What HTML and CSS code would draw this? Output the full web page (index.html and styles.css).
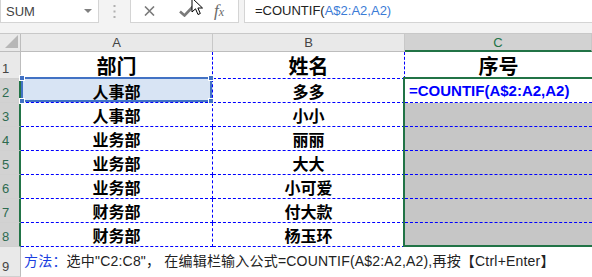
FILE: index.html
```html
<!DOCTYPE html>
<html>

<head>
    <title>COUNTIF 序号</title>
    <link rel="stylesheet" href="styles.css">
</head>

<body>
    <div class="toolbar">
        <div class="name-box"><span>SUM</span><span class="caret"></span></div>
        <div class="grip">
            <svg width="3" height="13" viewBox="0 0 3 13">
                <rect x="0.5" y="0" width="2" height="2" fill="#b0b0b0" />
                <rect x="0.5" y="5.5" width="2" height="2" fill="#b0b0b0" />
                <rect x="0.5" y="11" width="2" height="2" fill="#b0b0b0" />
            </svg>
        </div>
        <div class="func-box">
            <svg class="btn-x" width="11" height="10" viewBox="0 0 11 10">
                <path d="M1 0.5 L10 9.5 M10 0.5 L1 9.5" stroke="#7a7a7a" stroke-width="1.6" />
            </svg>
            <svg class="btn-ok" width="15" height="12" viewBox="0 0 15 12">
                <path d="M1 6.5 L5.5 10.5 L14 1.5" stroke="#7a7a7a" stroke-width="2.6" fill="none" />
            </svg>
            <span class="fx">f<span class="fx-sub">x</span></span>
        </div>
        <div class="formula">=COUNTIF(<span class="ref">A$2:A2,A2)</span></div>
    </div>

    <div class="sheet">
        <!-- column headers -->
        <div class="corner">
            <svg class="corner-tri" width="13" height="13" viewBox="0 0 13 13">
                <polygon points="13,0 13,13 0,13" fill="#b7b7b7" />
            </svg>
        </div>
        <div class="ch">A</div>
        <div class="ch">B</div>
        <div class="ch on">C</div>

        <div class="rh">1</div>
        <div class="cell head">部门</div>
        <div class="cell head">姓名</div>
        <div class="cell head last">序号</div>

        <div class="rh on">2</div>
        <div class="cell sel">人事部
            <div class="sel-frame">
                <span class="handle tl"></span>
                <span class="handle tr"></span>
                <span class="handle bl"></span>
                <span class="handle br"></span>
            </div>
        </div>
        <div class="cell">多多</div>
        <div class="cell last active">=COUNTIF(A$2:A2,A2)</div>

        <div class="rh on">3</div>
        <div class="cell">人事部</div>
        <div class="cell">小小</div>
        <div class="cell last gray"></div>

        <div class="rh on">4</div>
        <div class="cell">业务部</div>
        <div class="cell">丽丽</div>
        <div class="cell last gray"></div>

        <div class="rh on">5</div>
        <div class="cell">业务部</div>
        <div class="cell">大大</div>
        <div class="cell last gray"></div>

        <div class="rh on">6</div>
        <div class="cell">业务部</div>
        <div class="cell">小可爱</div>
        <div class="cell last gray"></div>

        <div class="rh on">7</div>
        <div class="cell">财务部</div>
        <div class="cell">付大款</div>
        <div class="cell last gray"></div>

        <div class="rh on">8</div>
        <div class="cell">财务部</div>
        <div class="cell">杨玉环</div>
        <div class="cell last gray"></div>

        <div class="rh">9</div>
        <div class="note"><span class="note-key">方法：</span>选中"C2:C8"， 在编辑栏输入公式=COUNTIF(A$2:A2,A2),再按【Ctrl+Enter】</div>

        <!-- selected range C2:C8 -->
        <div class="range-frame"></div>
    </div>

    <svg class="cursor" width="14" height="20" viewBox="0 0 14 20">
        <path d="M1 1 L1 15 L4.5 11.8 L7 17.5 L9.3 16.5 L6.9 11 L11.5 11 Z" fill="#fff" stroke="#000" stroke-width="1" stroke-linejoin="round" />
    </svg>
</body>

</html>
```

FILE: styles.css
```css
* {
    box-sizing: border-box;
}

body {
    margin: 0;
    width: 592px;
    height: 277px;
    overflow: hidden;
    position: relative;
    background: #fff;
    font-family: "Liberation Sans", "Noto Sans CJK SC", sans-serif;
}

/* Formula bar */
.toolbar {
    display: flex;
    align-items: flex-start;
    height: 34px;
    background: #f3f3f3;
    border-bottom: 1px solid #c8c8c8;
}

.name-box {
    display: flex;
    align-items: center;
    justify-content: space-between;
    width: 99px;
    height: 23px;
    padding: 0 6px 0 5px;
    background: #fff;
    border: 1px solid #d4d4d4;
    border-top: none;
    font-size: 13px;
    color: #444;
}

.caret {
    border-left: 4px solid transparent;
    border-right: 4px solid transparent;
    border-top: 4px solid #808080;
}

.grip {
    display: flex;
    align-items: center;
    justify-content: center;
    width: 31px;
    height: 23px;
}

.func-box {
    display: flex;
    align-items: center;
    width: 109px;
    height: 23px;
    padding-left: 13px;
    background: #fff;
    border: 1px solid #d4d4d4;
    border-top: none;
}

.btn-ok {
    margin-left: 24px;
}

.fx {
    margin-left: 20px;
    font-family: "Liberation Serif", serif;
    font-style: italic;
    font-size: 17px;
    line-height: 18px;
    color: #6a6a6a;
}

.fx-sub {
    font-size: 12px;
}

.formula {
    flex: 1;
    height: 23px;
    margin-left: 5px;
    padding-left: 10px;
    background: #fff;
    border-left: 1px solid #d4d4d4;
    border-bottom: 1px solid #d4d4d4;
    font-size: 13px;
    line-height: 22px;
    color: #222;
}

.ref {
    color: #3b7bd6;
}

/* Sheet grid */
.sheet {
    position: relative;
    display: grid;
    grid-template-columns: 21px 192px 192px 1fr;
    grid-template-rows: 18px 27px repeat(7, 24px) 30px;
}

.corner {
    position: relative;
    background: #e9e9e9;
    border-right: 1px solid #bdbdbd;
    border-bottom: 1px solid #bdbdbd;
}

.corner-tri {
    position: absolute;
    right: 2px;
    bottom: 3px;
}

.ch {
    background: #e9e9e9;
    border-right: 1px solid #c8c8c8;
    border-bottom: 1px solid #bdbdbd;
    text-align: center;
    font-size: 13px;
    line-height: 17px;
    color: #444;
}

.ch.on {
    background: #d2d2d2;
    color: #217346;
    border-bottom: 2px solid #217346;
}

.rh {
    display: flex;
    align-items: flex-end;
    padding: 0 0 2px 2px;
    background: #e9e9e9;
    border-right: 1px solid #bdbdbd;
    border-bottom: 1px solid #d0d0d0;
    font-size: 13px;
    color: #444;
}

.rh.on {
    background: #d2d2d2;
    color: #2e6b50;
    border-right: 2px solid #217346;
}

.cell {
    display: flex;
    align-items: center;
    justify-content: center;
    border-right: 1px dashed #0000ff;
    border-bottom: 1px dashed #0000ff;
    font-size: 16px;
    font-weight: 700;
    color: #000;
    white-space: nowrap;
}

.cell.head {
    font-size: 20px;
}

.cell.last {
    border-right: none;
}

.cell.gray {
    background: #c6c6c6;
}

.cell.active {
    justify-content: flex-start;
    padding-left: 4px;
    font-size: 15px;
    color: #0000ff;
}

.cell.sel {
    position: relative;
    background: #d8e4f4;
}

.sel-frame {
    position: absolute;
    top: -2px;
    left: 0;
    right: 0;
    bottom: 0;
    border: 2px solid #4272c4;
}

.handle {
    position: absolute;
    width: 6px;
    height: 6px;
    background: #4272c4;
    border: 1px solid #fff;
}

.handle.tl {
    top: -4px;
    left: -4px;
}

.handle.tr {
    top: -4px;
    right: -4px;
}

.handle.bl {
    bottom: -4px;
    left: -4px;
}

.handle.br {
    bottom: -4px;
    right: -4px;
}

.range-frame {
    position: absolute;
    grid-row: 3 / 10;
    grid-column: 4 / 5;
    top: -2px;
    left: -2px;
    right: -6px;
    bottom: 0;
    border: 2px solid #217346;
    pointer-events: none;
}

.note {
    grid-column: 2 / 5;
    padding: 4px 0 0 3px;
    font-size: 14px;
    line-height: 20px;
    letter-spacing: 0.2px;
    color: #222;
    white-space: nowrap;
}

.note-key {
    color: #1a3ee0;
}

.cursor {
    position: absolute;
    left: 191px;
    top: -3px;
}
```
